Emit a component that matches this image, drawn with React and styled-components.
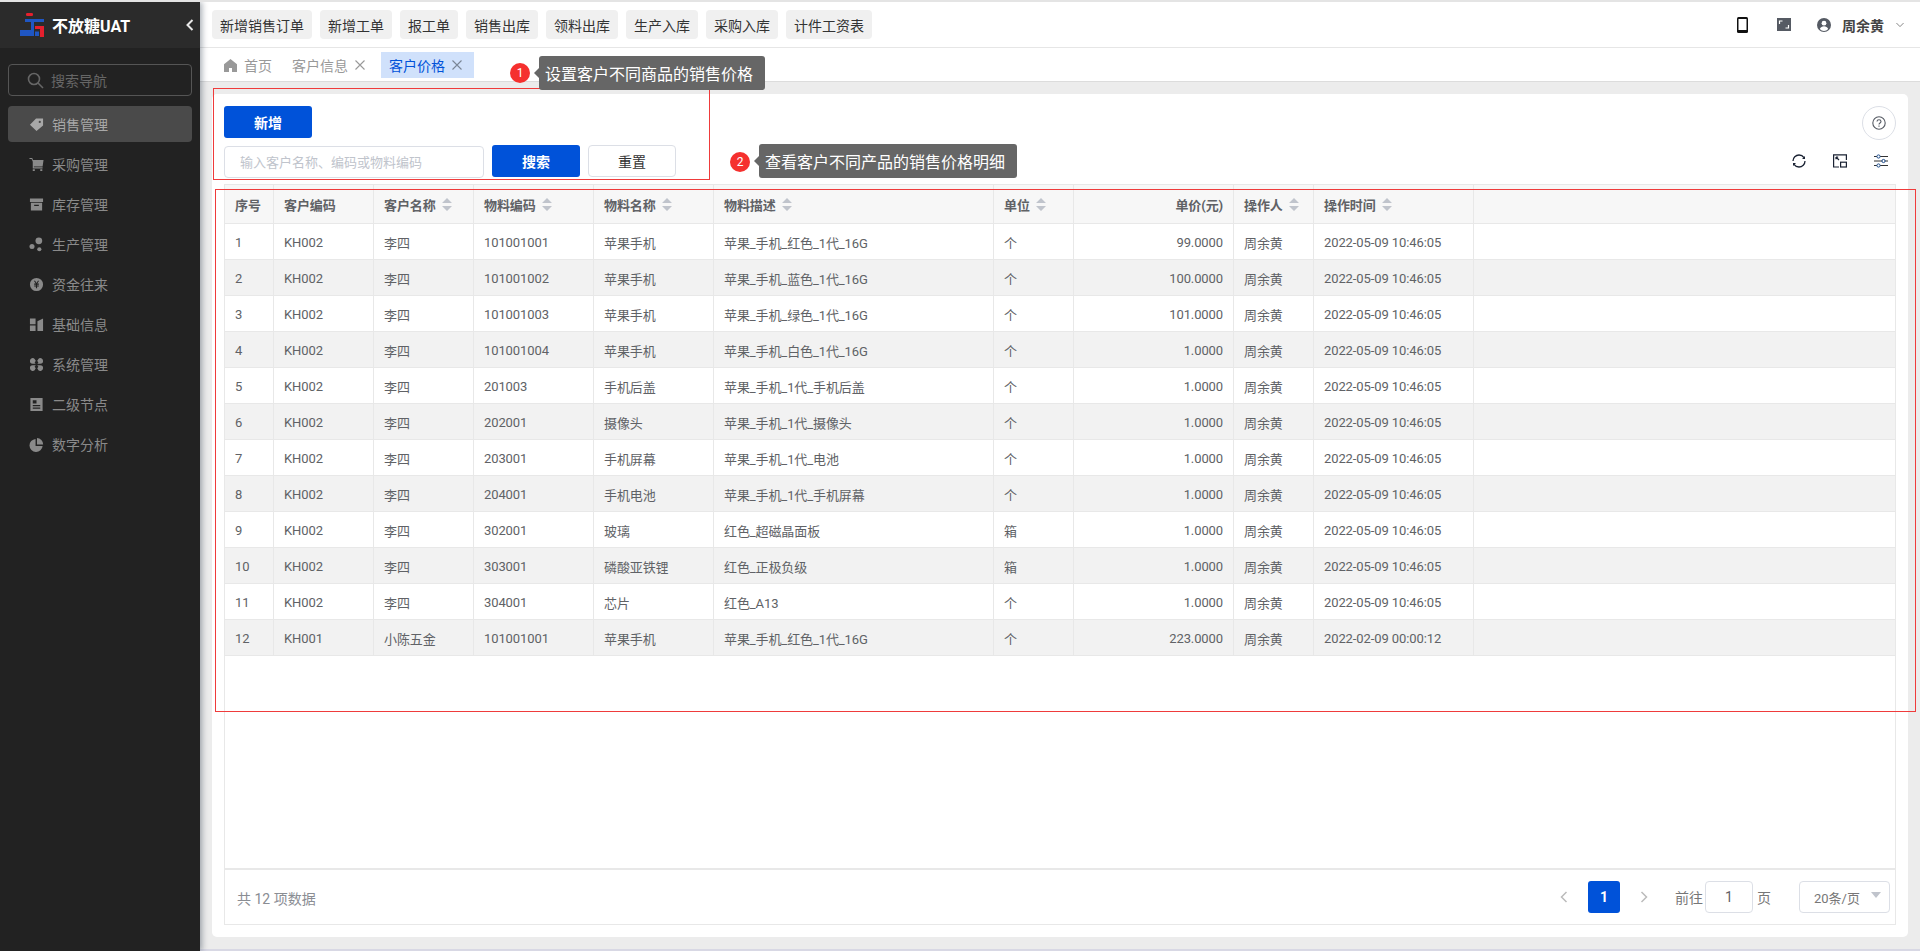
import React from "react";
import styled, { createGlobalStyle } from "styled-components";

const FONT = `Roboto, "Noto Sans CJK SC", sans-serif`;

const Global = createGlobalStyle`
  html, body { margin: 0; padding: 0; height: 100%; overflow: hidden; }
  body { font-family: ${FONT}; font-size: 13px; color: #606266; background: #ececec; }
  * { box-sizing: border-box; }
`;

const Page = styled.div`
  position: relative;
  width: 1920px;
  height: 951px;
  display: flex;
  border-top: 2px solid #e4e4e4;
  overflow: hidden;
`;
const Sidebar = styled.aside`
  position: relative;
  z-index: 1;
  width: 200px;
  flex: none;
  background: #222222;
  display: flex;
  flex-direction: column;
  box-shadow: 2px 0 6px rgba(0, 21, 41, 0.35);
`;
const Brand = styled.div`
  height: 46px;
  background: #2b2b2b;
  display: flex;
  align-items: center;
  padding-left: 20px;
  gap: 8px;
`;
const BrandName = styled.span`
  color: #fff;
  font-size: 16px;
  font-weight: 700;
  flex: 1;
`;
const Collapse = styled.span`
  display: flex;
  margin-right: 6px;
  color: #e8e8e8;
`;
const NavSearch = styled.div`
  margin: 16px 8px 10px;
  height: 32px;
  border: 1px solid #555;
  border-radius: 4px;
  display: flex;
  align-items: center;
  gap: 7px;
  padding-left: 18px;
  color: #666;
  font-size: 14px;
`;
const NavList = styled.nav`
  display: flex;
  flex-direction: column;
  gap: 4px;
  padding: 0 8px;
`;
const NavItem = styled.div`
  height: 36px;
  border-radius: 4px;
  display: flex;
  align-items: center;
  gap: 8px;
  padding-left: 21px;
  font-size: 14px;
  color: ${(p) => (p.$active ? "#a8a8a8" : "#8a8a8a")};
  background: ${(p) => (p.$active ? "#4a4a4a" : "transparent")};
`;
const Main = styled.main`
  flex: 1;
  min-width: 0;
  display: flex;
  flex-direction: column;
  background: #ececec;
`;
const TopBar = styled.header`
  height: 46px;
  flex: none;
  background: #fff;
  border-bottom: 1px solid #e6e6e6;
  display: flex;
  align-items: center;
  padding: 0 16px 0 12px;
  gap: 8px;
`;
const Quick = styled.button`
  height: 29px;
  padding: 0 8px;
  border: 0;
  border-radius: 4px;
  background: #f0f0f0;
  color: #333;
  font: 14px ${FONT};
`;
const TopRight = styled.div`
  margin-left: auto;
  display: flex;
  align-items: center;
  color: #333;
`;
const TopIcon = styled.span`
  display: flex;
  margin-right: ${(p) => p.$gap}px;
`;
const UserName = styled.span`
  font-size: 14px;
  font-weight: 700;
  color: #444;
  margin: 0 12px 0 11px;
`;
const Tabs = styled.div`
  height: 34px;
  flex: none;
  background: #fff;
  border-bottom: 1px solid #dcdcdc;
  display: flex;
  align-items: flex-start;
  padding: 4px 0 0 24px;
`;
const Tab = styled.div`
  height: 26px;
  display: flex;
  align-items: center;
  font-size: 14px;
  gap: 7px;
  padding: ${(p) => (p.$active ? "0 12px 0 8px" : "0")};
  margin-right: ${(p) => p.$mr || 0}px;
  background: ${(p) => (p.$active ? "#d0e1fb" : "transparent")};
  color: ${(p) => (p.$active ? "#0052d9" : "#999")};
`;
const Card = styled.section`
  flex: 1;
  min-height: 0;
  margin: 12px 12px 12px;
  background: #fff;
  border-radius: 5px;
  padding: 12px;
  display: flex;
  flex-direction: column;
`;
const BottomStrip = styled.div`
  height: 2px;
  flex: none;
  background: #d8d8e4;
`;
const CardTop = styled.div`
  display: flex;
  justify-content: space-between;
  align-items: flex-start;
`;
const Primary = styled.button`
  width: 88px;
  height: 32px;
  border: 0;
  border-radius: 3px;
  background: #0052d9;
  color: #fff;
  font: 700 14px ${FONT};
`;
const Help = styled.div`
  width: 34px;
  height: 34px;
  border-radius: 50%;
  border: 1px solid #dcdfe6;
  display: flex;
  align-items: center;
  justify-content: center;
`;
const SearchRow = styled.div`
  margin-top: 5px;
  display: flex;
  align-items: center;
  gap: 8px;
  height: 32px;
`;
const SearchInput = styled.div`
  width: 260px;
  height: 32px;
  margin-top: 1px;
  border: 1px solid #dcdfe6;
  border-radius: 4px;
  padding-left: 15px;
  display: flex;
  align-items: center;
  color: #c0c4cc;
  font-size: 13px;
`;
const Ghost = styled.button`
  width: 88px;
  height: 32px;
  border: 1px solid #dcdfe6;
  border-radius: 4px;
  background: #fff;
  color: #333;
  font: 14px ${FONT};
`;
const Tools = styled.div`
  margin-left: auto;
  display: flex;
  gap: 27px;
  padding-right: 8px;
`;
const TableBox = styled.div`
  flex: 1;
  min-height: 0;
  margin-top: 7px;
  border: 1px solid #e8e8e8;
  display: flex;
  flex-direction: column;
`;
const TableBody = styled.div`
  flex: 1;
  min-height: 0;
  border-bottom: 2px solid #e8e8e8;
`;
const Row = styled.div`
  display: grid;
  grid-template-columns: 49px 100px 100px 120px 120px 280px 80px 160px 80px 160px 1fr;
  height: ${(p) => (p.$head ? 39 : 36)}px;
  background: ${(p) => (p.$head ? "#f7f7f7" : p.$stripe ? "#f2f2f2" : "#fff")};
  border-bottom: 1px solid #e8e8e8;
  font-weight: ${(p) => (p.$head ? 700 : 400)};
`;
const Cell = styled.div`
  display: flex;
  align-items: center;
  justify-content: ${(p) => (p.$right ? "flex-end" : "flex-start")};
  padding: ${(p) => (p.$head ? "0 10px" : "2px 10px 0")};
  border-right: 1px solid #e8e8e8;
  color: #606266;
  white-space: nowrap;
  font-size: 13px;
  letter-spacing: -0.1px;
`;
const LastCell = styled.div``;
const Sort = styled.span`
  display: inline-flex;
  margin-left: 6px;
`;
const Footer = styled.div`
  height: 54px;
  flex: none;
  display: flex;
  align-items: center;
  padding: 0 5px 0 12px;
  color: #8a8d93;
  font-size: 14px;
`;
const Total = styled.span`
  margin-right: auto;
  padding-top: 2px;
`;
const PageNav = styled.span`
  display: flex;
  width: 38px;
  justify-content: center;
`;
const PageNum = styled.div`
  width: 32px;
  height: 32px;
  margin: 0 5px;
  border-radius: 3px;
  background: #0052d9;
  color: #fff;
  font-weight: 700;
  font-size: 14px;
  display: flex;
  align-items: center;
  justify-content: center;
`;
const Label = styled.span`
  margin: 0 ${(p) => p.$r}px 0 ${(p) => p.$l}px;
  color: #777;
`;
const PageInput = styled.div`
  width: 48px;
  height: 32px;
  border: 1px solid #dcdfe6;
  border-radius: 4px;
  display: flex;
  align-items: center;
  justify-content: center;
  color: #606266;
`;
const PageSelect = styled.div`
  position: relative;
  width: 91px;
  height: 32px;
  border: 1px solid #dcdfe6;
  border-radius: 4px;
  display: flex;
  align-items: center;
  padding-left: 14px;
  font-size: 13px;
  color: #777;
`;
const Caret = styled.span`
  position: absolute;
  right: 8px;
  top: 10px;
  width: 0;
  height: 0;
  border: 5px solid transparent;
  border-top: 6px solid #c0c4cc;
`;
const Mark = styled.div`
  position: absolute;
  z-index: 2;
  left: ${(p) => p.$x}px;
  top: ${(p) => p.$y}px;
  width: ${(p) => p.$w}px;
  height: ${(p) => p.$h}px;
  border: 1px solid #ef3b3b;
  pointer-events: none;
`;
const Badge = styled.div`
  position: absolute;
  z-index: 2;
  left: ${(p) => p.$x}px;
  top: ${(p) => p.$y}px;
  width: 20px;
  height: 20px;
  border-radius: 50%;
  background: #f5302e;
  color: #fff;
  font-size: 12px;
  display: flex;
  align-items: center;
  justify-content: center;
`;
const Tip = styled.div`
  position: absolute;
  z-index: 2;
  left: ${(p) => p.$x}px;
  top: ${(p) => p.$y}px;
  width: ${(p) => p.$w}px;
  height: 34px;
  border-radius: 3px;
  background: #666;
  color: #fff;
  font-size: 16px;
  display: flex;
  align-items: center;
  padding-left: 6px;
  &::before {
    content: "";
    position: absolute;
    left: -5px;
    top: 12px;
    border: 5px solid transparent;
    border-left: 0;
    border-right-color: #666;
  }
`;

const S = ({ children, size = 14, view = "0 0 16 16" }) => (
  <svg width={size} height={size} viewBox={view} fill="currentColor">{children}</svg>
);

const Logo = () => (
  <svg width="24" height="24" viewBox="0 0 24 24">
    <rect x="6" y="0" width="7" height="3" rx="1.2" fill="#e5202e" />
    <path d="M5 6h19v3H14v14H0v-6h11V9H5z" fill="#1f56c3" />
    <path d="M15 13h9v11h-4v-8h-5z" fill="#e5202e" />
    <rect x="15" y="18.5" width="4" height="4.5" fill="#1f56c3" />
  </svg>
);

const navIcons = {
  tag: <path d="M7.5 1.5H15v7.5L8 15 1 8.2zM11.5 4a1.2 1.2 0 100 2.4 1.2 1.2 0 000-2.4z" fillRule="evenodd" />,
  cart: <path d="M.5 1h3l.7 2.2H15.5l-1 6.8H5.2v1H14.5v1.2H4V5L2.8 2.2H.5zM4 13h2.2v2H4zm8 0h2.2v2H12z" />,
  box: <path d="M1 1.5h14v3.7H1zm1 4.7h12V14.5H2zm3.5 2V9.6h5V8.2z" fillRule="evenodd" />,
  dots: <g><circle cx="10.5" cy="4" r="3.6" /><circle cx="3.2" cy="10.2" r="2.7" /><circle cx="11" cy="13" r="2.2" /></g>,
  coin: <path d="M8 1a7 7 0 110 14A7 7 0 018 1zM5.2 4l2 3H5.5v1.2h1.9V9H5.5v1.2h1.9V12h1.2v-1.8h1.9V9H8.6v-.8h1.9V7H8.8l2-3H9.5L8 6.3 6.5 4z" fillRule="evenodd" />,
  grid: <path d="M1 1.5h6V7.8H1zm0 7.5h6v6H1zM9 4.5l6-3V15H9z" />,
  four: <path d="M1 4a3 3 0 015-2 2.5 2.5 0 010 .1L7.2 4 6 6 7.2 7.2H4a3 3 0 01-3-3.2zm14 0a3 3 0 00-5-2L8.8 4 10 6 8.8 7.2H12a3 3 0 003-3.2zM1 12a3 3 0 005 2l1.2-1.9L6 10.5l1.2-1.7H4A3 3 0 001 12zm14 0a3 3 0 01-5 2l-1.2-1.9 1.2-1.6-1.2-1.7H12a3 3 0 013 3.2z" />,
  doc: <path d="M1.5 1h13v14h-13zM4 3.5V7h4V3.5zM4 8.5v1.3h8V8.5zM4 11.2v1.3h8v-1.3z" fillRule="evenodd" />,
  pie: <path d="M7 2v7.5h7.5A7 7 0 117 2zm1.5-1a7 7 0 016.6 7H8.5z" />,
};

const nav = [
  ["销售管理", "tag", true],
  ["采购管理", "cart"],
  ["库存管理", "box"],
  ["生产管理", "dots"],
  ["资金往来", "coin"],
  ["基础信息", "grid"],
  ["系统管理", "four"],
  ["二级节点", "doc"],
  ["数字分析", "pie"],
];

const quick = ["新增销售订单", "新增工单", "报工单", "销售出库", "领料出库", "生产入库", "采购入库", "计件工资表"];

const columns = [
  ["序号"],
  ["客户编码"],
  ["客户名称", true],
  ["物料编码", true],
  ["物料名称", true],
  ["物料描述", true],
  ["单位", true],
  ["单价(元)", false, true],
  ["操作人", true],
  ["操作时间", true],
];

const T1 = "2022-05-09 10:46:05";
const rows = [
  ["KH002", "李四", "101001001", "苹果手机", "苹果_手机_红色_1代_16G", "个", "99.0000", T1],
  ["KH002", "李四", "101001002", "苹果手机", "苹果_手机_蓝色_1代_16G", "个", "100.0000", T1],
  ["KH002", "李四", "101001003", "苹果手机", "苹果_手机_绿色_1代_16G", "个", "101.0000", T1],
  ["KH002", "李四", "101001004", "苹果手机", "苹果_手机_白色_1代_16G", "个", "1.0000", T1],
  ["KH002", "李四", "201003", "手机后盖", "苹果_手机_1代_手机后盖", "个", "1.0000", T1],
  ["KH002", "李四", "202001", "摄像头", "苹果_手机_1代_摄像头", "个", "1.0000", T1],
  ["KH002", "李四", "203001", "手机屏幕", "苹果_手机_1代_电池", "个", "1.0000", T1],
  ["KH002", "李四", "204001", "手机电池", "苹果_手机_1代_手机屏幕", "个", "1.0000", T1],
  ["KH002", "李四", "302001", "玻璃", "红色_超磁晶面板", "箱", "1.0000", T1],
  ["KH002", "李四", "303001", "磷酸亚铁锂", "红色_正极负级", "箱", "1.0000", T1],
  ["KH002", "李四", "304001", "芯片", "红色_A13", "个", "1.0000", T1],
  ["KH001", "小陈五金", "101001001", "苹果手机", "苹果_手机_红色_1代_16G", "个", "223.0000", "2022-02-09 00:00:12"],
];

const SortIcon = () => (
  <Sort>
    <svg width="10" height="13" viewBox="0 0 10 13" fill="#c0c4cc">
      <path d="M5 0l5 5H0zM0 8h10l-5 5z" />
    </svg>
  </Sort>
);

const Close = ({ color }) => (
  <svg width="10" height="10" viewBox="0 0 10 10" stroke={color} strokeWidth="1.1" fill="none">
    <path d="M.5.5l9 9M9.5.5l-9 9" />
  </svg>
);

export default function App() {
  return (
    <>
      <Global />
      <Page>
        <Sidebar>
          <Brand>
            <Logo />
            <BrandName>不放糖UAT</BrandName>
            <Collapse>
              <svg width="8" height="12" viewBox="0 0 8 12" fill="none" stroke="currentColor" strokeWidth="2">
                <path d="M6.5 1L1.5 6l5 5" />
              </svg>
            </Collapse>
          </Brand>
          <NavSearch>
            <svg width="17" height="17" viewBox="0 0 17 17" fill="none" stroke="#666" strokeWidth="1.6">
              <circle cx="7" cy="7" r="5.5" />
              <path d="M11 11l5 5" />
            </svg>
            搜索导航
          </NavSearch>
          <NavList>
            {nav.map(([label, ic, active]) => (
              <NavItem key={label} $active={active}>
                <S size={15}>{navIcons[ic]}</S>
                {label}
              </NavItem>
            ))}
          </NavList>
        </Sidebar>
        <Main>
          <TopBar>
            {quick.map((q) => (
              <Quick key={q}>{q}</Quick>
            ))}
            <TopRight>
              <TopIcon $gap={29}>
                <svg width="11" height="16" viewBox="0 0 11 16">
                  <rect x="0" y="0" width="11" height="16" rx="1.5" fill="#111" />
                  <rect x="1.5" y="2" width="8" height="11" fill="#fff" />
                </svg>
              </TopIcon>
              <TopIcon $gap={26}>
                <svg width="14" height="13" viewBox="0 0 14 13">
                  <rect width="14" height="13" fill="#555a63" />
                  <path d="M2.5 6V3h3M11.5 7v3h-3" stroke="#fff" strokeWidth="1.2" fill="none" />
                </svg>
              </TopIcon>
              <svg width="14" height="14" viewBox="0 0 14 14">
                <circle cx="7" cy="7" r="7" fill="#555a63" />
                <circle cx="7" cy="5.2" r="2.4" fill="#fff" />
                <path d="M2.8 11c.8-2 2.4-2.8 4.2-2.8s3.4.8 4.2 2.8A5.6 5.6 0 012.8 11z" fill="#fff" />
              </svg>
              <UserName>周余黄</UserName>
              <svg width="8" height="6" viewBox="0 0 9 6" fill="none" stroke="#777" strokeWidth="1">
                <path d="M.5.8l4 4 4-4" />
              </svg>
            </TopRight>
          </TopBar>
          <Tabs>
            <Tab $mr={20}>
              <svg width="13" height="13" viewBox="0 0 13 13" fill="#999">
                <path d="M6.5 0L13 5.2V13H8V9H5v4H0V5.2z" />
              </svg>
              首页
            </Tab>
            <Tab $mr={16}>
              客户信息
              <Close color="#999" />
            </Tab>
            <Tab $active>
              客户价格
              <Close color="#7a8696" />
            </Tab>
          </Tabs>
          <Card>
            <CardTop>
              <Primary>新增</Primary>
              <Help>
                <svg width="14" height="14" viewBox="0 0 14 14" fill="none" stroke="#555a63" strokeWidth="1.1">
                  <circle cx="7" cy="7" r="6.2" />
                  <path d="M5 5.5C5 4.3 6 3.7 7 3.7s2 .7 2 1.8c0 1.5-2 1.5-2 3" />
                  <path d="M7 9.6v1.2" />
                </svg>
              </Help>
            </CardTop>
            <SearchRow>
              <SearchInput>输入客户名称、编码或物料编码</SearchInput>
              <Primary>搜索</Primary>
              <Ghost>重置</Ghost>
              <Tools>
                <svg width="14" height="14" viewBox="0 0 14 14" fill="none" stroke="#1a2233" strokeWidth="1.3">
                  <path d="M1 7a6 6 0 0 1 6-6 6 6 0 0 1 5 2.6" />
                  <path d="M13 7a6 6 0 0 1-6 6 6 6 0 0 1-5-2.6" />
                  <path d="M13 2v3h-3zM1 12V9h3z" fill="#1a2233" stroke="none" />
                </svg>
                <svg width="14" height="14" viewBox="0 0 14 14" fill="none" stroke="#1a2233" strokeWidth="1.2">
                  <path d="M6 13H.6V.8h12.8V6" />
                  <rect x="7.6" y="8.2" width="5.8" height="4.8" />
                  <path d="M3 3l3 3M3 3h2.2M3 3v2.2" />
                </svg>
                <svg width="14" height="14" viewBox="0 0 14 14" fill="none" stroke="#333" strokeWidth="1">
                  <path d="M0 2.5h14M0 7h14M0 11.5h14" />
                  <circle cx="4.5" cy="2.5" r="1.6" fill="#fff" stroke="#1a4a8a" />
                  <circle cx="9.5" cy="7" r="1.6" fill="#fff" stroke="#1a4a8a" />
                  <circle cx="4.5" cy="11.5" r="1.6" fill="#fff" stroke="#1a4a8a" />
                </svg>
              </Tools>
            </SearchRow>
            <TableBox>
              <TableBody>
                <Row $head>
                  {columns.map(([label, sort, right]) => (
                    <Cell key={label} $head $right={right}>
                      {label}
                      {sort && <SortIcon />}
                    </Cell>
                  ))}
                  <LastCell />
                </Row>
                {rows.map((r, i) => (
                  <Row key={i} $stripe={i % 2 === 1}>
                    <Cell>{i + 1}</Cell>
                    <Cell>{r[0]}</Cell>
                    <Cell>{r[1]}</Cell>
                    <Cell>{r[2]}</Cell>
                    <Cell>{r[3]}</Cell>
                    <Cell>{r[4]}</Cell>
                    <Cell>{r[5]}</Cell>
                    <Cell $right>{r[6]}</Cell>
                    <Cell>周余黄</Cell>
                    <Cell>{r[7]}</Cell>
                    <LastCell />
                  </Row>
                ))}
              </TableBody>
              <Footer>
                <Total>共 12 项数据</Total>
                <PageNav>
                  <svg width="8" height="12" viewBox="0 0 8 12" fill="none" stroke="#bbb" strokeWidth="1.5">
                    <path d="M6.5 1L1.5 6l5 5" />
                  </svg>
                </PageNav>
                <PageNum>1</PageNum>
                <PageNav>
                  <svg width="8" height="12" viewBox="0 0 8 12" fill="none" stroke="#bbb" strokeWidth="1.5">
                    <path d="M1.5 1l5 5-5 5" />
                  </svg>
                </PageNav>
                <Label $l={12} $r={2}>前往</Label>
                <PageInput>1</PageInput>
                <Label $l={4} $r={28}>页</Label>
                <PageSelect>
                  20条/页
                  <Caret />
                </PageSelect>
              </Footer>
            </TableBox>
          </Card>
          <BottomStrip />
        </Main>
        <Mark $x={213} $y={86} $w={497} $h={92} />
        <Mark $x={215} $y={187} $w={1701} $h={523} />
        <Badge $x={510} $y={61}>1</Badge>
        <Tip $x={539} $y={54} $w={226}>设置客户不同商品的销售价格</Tip>
        <Badge $x={730} $y={150}>2</Badge>
        <Tip $x={759} $y={142} $w={258}>查看客户不同产品的销售价格明细</Tip>
      </Page>
    </>
  );
}
